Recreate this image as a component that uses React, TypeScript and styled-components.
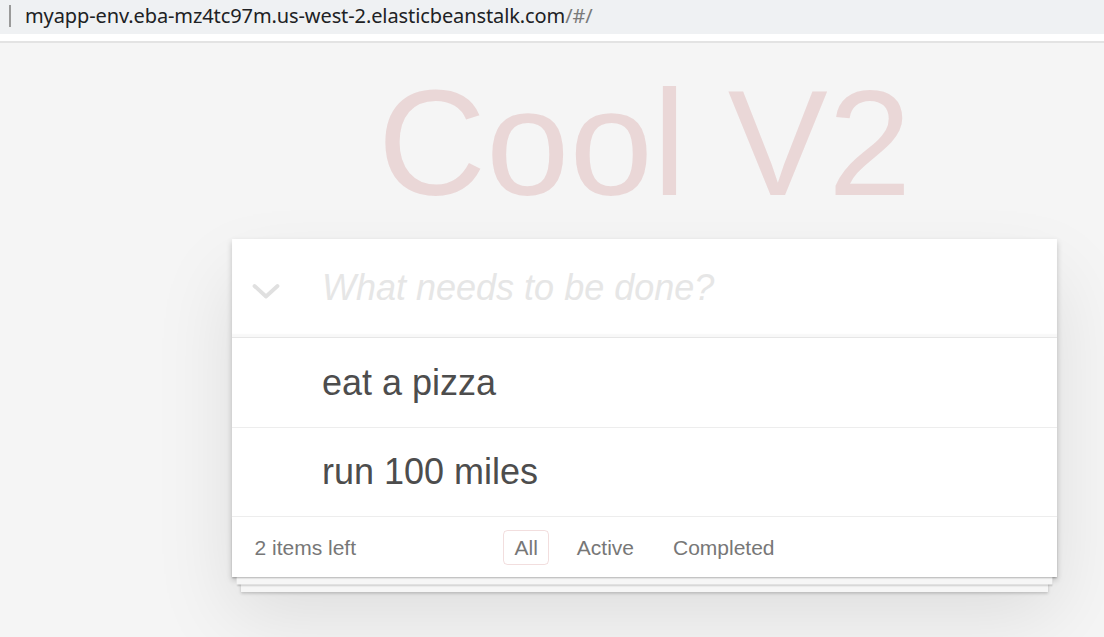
import React from "react";
import styled, { createGlobalStyle } from "styled-components";

const GlobalStyle = createGlobalStyle`
  html, body {
    margin: 0;
    padding: 0;
    background: #f5f5f5;
    font-family: "Liberation Sans", Arial, sans-serif;
  }
  * { box-sizing: border-box; }
`;

const Page = styled.div`
  width: 1104px;
  height: 637px;
  overflow: hidden;
  background: #f5f5f5;
  display: flex;
  flex-direction: column;
`;

const AddressBar = styled.div`
  height: 34px;
  background: #eff1f3;
  display: flex;
  align-items: center;
  padding-left: 9px;
  gap: 14px;
`;

const Caret = styled.span`
  width: 2px;
  height: 22px;
  background: #9a9a9a;
  margin-bottom: 2px;
`;

const Url = styled.span`
  font-family: "Noto Sans", "Open Sans", sans-serif;
  font-size: 20px;
  color: #202124;
  letter-spacing: -0.1px;
  margin-bottom: 3px;
`;

const UrlTail = styled.span`
  color: #7a7a7a;
`;

const BarGap = styled.div`
  height: 9px;
  background: #ffffff;
  border-bottom: 2px solid #e3e3e3;
`;

const App = styled.section`
  width: 825px;
  margin-left: 232px;
  display: flex;
  flex-direction: column;
`;

const Title = styled.h1`
  margin: 25px 0 21px 0;
  height: 150px;
  font-family: "Liberation Sans", Arial, sans-serif;
  font-size: 150px;
  line-height: 150px;
  font-weight: 400;
  text-align: center;
  color: rgba(175, 47, 47, 0.15);
`;

const Card = styled.div`
  background: #ffffff;
  box-shadow: 0 3px 6px 0 rgba(0, 0, 0, 0.2), 0 37.5px 75px 0 rgba(0, 0, 0, 0.1);
  display: flex;
  flex-direction: column;
`;

const Header = styled.header`
  height: 98px;
  display: flex;
  align-items: center;
  box-shadow: inset 0 -3px 1.5px rgba(0, 0, 0, 0.03);
`;

const ToggleAll = styled.div`
  width: 90px;
  height: 100%;
  display: flex;
  align-items: center;
  padding-left: 20px;
  padding-top: 6px;
`;

const NewTodo = styled.input`
  flex: 1;
  border: none;
  outline: none;
  background: transparent;
  font-family: "Liberation Sans", Arial, sans-serif;
  font-size: 36px;
  padding: 0 24px 0 0;
  color: #4d4d4d;
  &::placeholder {
    font-style: italic;
    font-weight: 300;
    color: #e6e6e6;
  }
`;

const List = styled.ul`
  margin: 0;
  padding: 0;
  list-style: none;
  border-top: 1.5px solid #e6e6e6;
`;

const Item = styled.li`
  font-size: 36px;
  line-height: 43.5px;
  padding: 22.5px 22.5px 22.5px 90px;
  color: #4d4d4d;
  border-bottom: 1.5px solid #ededed;
`;

const Footer = styled.footer`
  height: 60px;
  padding: 0 22.5px;
  display: grid;
  grid-template-columns: 1fr auto 1fr;
  align-items: center;
  font-size: 21px;
  color: #777777;
  box-shadow: 0 1.5px 1.5px rgba(0, 0, 0, 0.2),
    0 12px 0 -4.5px #f6f6f6,
    0 13.5px 1.5px -4.5px rgba(0, 0, 0, 0.2),
    0 24px 0 -9px #f6f6f6,
    0 25.5px 3px -9px rgba(0, 0, 0, 0.2);
`;

const Count = styled.span`
  padding-top: 1px;
`;

const Filters = styled.ul`
  margin: 0;
  padding: 0;
  list-style: none;
  display: flex;
  padding-top: 1px;
`;

const Filter = styled.li<{ $selected?: boolean }>`
  margin: 4.5px 8px;
  padding: 4.5px 10.5px;
  line-height: 24px;
  border: 1.5px solid ${(p) => (p.$selected ? "rgba(175, 47, 47, 0.16)" : "transparent")};
  border-radius: 4.5px;
  color: #777777;
`;

function Chevron() {
  return (
    <svg width="28" height="17" viewBox="0 0 28 17">
      <polyline
        points="2.5,3 14,13.5 25.5,3"
        fill="none"
        stroke="#e0e0e0"
        strokeWidth="3.8"
        strokeLinecap="round"
        strokeLinejoin="round"
      />
    </svg>
  );
}

const todos = ["eat a pizza", "run 100 miles"];

export default function AppRoot() {
  return (
    <>
      <GlobalStyle />
      <Page>
        <AddressBar>
          <Caret />
          <Url>
            myapp-env.eba-mz4tc97m.us-west-2.elasticbeanstalk.com<UrlTail>/#/</UrlTail>
          </Url>
        </AddressBar>
        <BarGap />
        <App>
          <Title>Cool V2</Title>
          <Card>
            <Header>
              <ToggleAll>
                <Chevron />
              </ToggleAll>
              <NewTodo placeholder="What needs to be done?" readOnly />
            </Header>
            <List>
              {todos.map((t) => (
                <Item key={t}>{t}</Item>
              ))}
            </List>
            <Footer>
              <Count>2 items left</Count>
              <Filters>
                <Filter $selected>All</Filter>
                <Filter>Active</Filter>
                <Filter>Completed</Filter>
              </Filters>
              <span />
            </Footer>
          </Card>
        </App>
      </Page>
    </>
  );
}
